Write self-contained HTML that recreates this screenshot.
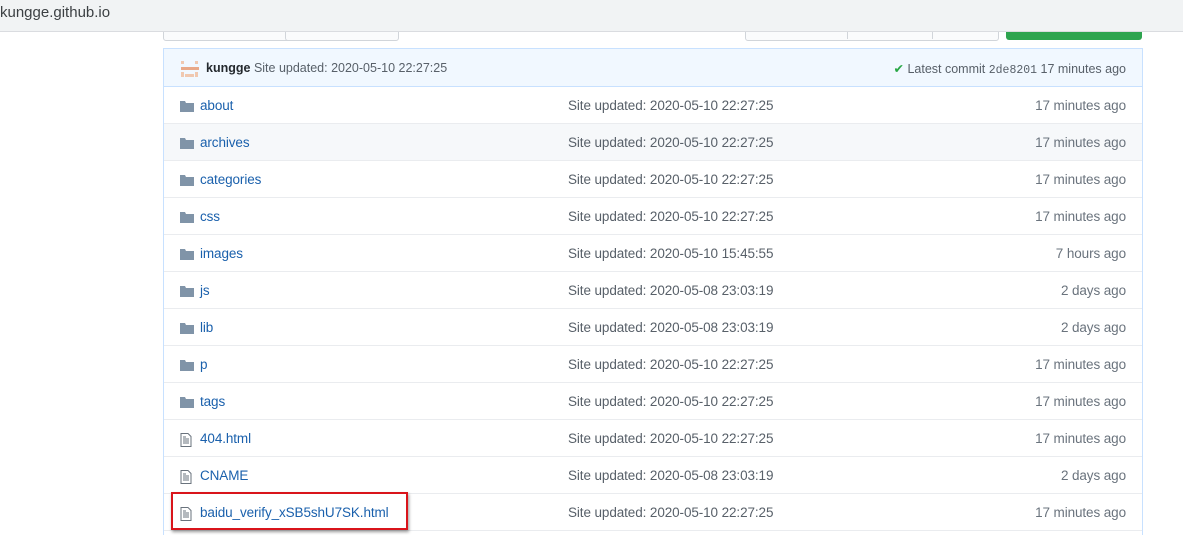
<!DOCTYPE html>
<html><head><style>
html,body{margin:0;width:1183px;height:535px;overflow:hidden}
body{background:#fff;font-family:"Liberation Sans",sans-serif;font-size:14px;color:#24292e;position:relative}
.top{position:absolute;left:0;top:0;width:1183px;height:31px;background:#f1f3f4;border-bottom:1px solid #dadce0;z-index:5}
.top span{position:absolute;left:0;top:4px;font-size:15px;color:#3c4043}
.btn{position:absolute;top:20px;height:19px;border:1px solid #d1d5da;border-radius:0 0 3px 3px;background:#fafbfc}
.box{position:absolute;left:163px;top:48px;width:978px;height:487px;border:1px solid #c8e1ff;border-bottom:none;overflow:hidden}
.hdr{height:37px;background:#f1f8ff;border-bottom:1px solid #c8e1ff;position:relative;font-size:12.5px}
.row{height:36px;border-top:1px solid #eaecef;position:relative;font-size:13.5px;letter-spacing:-0.1px}
.ic{position:absolute;left:16px;top:12px}
.nm{position:absolute;left:36px;top:11px;color:#1a60ac}
.msg{position:absolute;left:404px;top:11px;color:#586069}
.age{position:absolute;right:16px;top:11px;color:#6a737d}
</style></head><body>
<div class="top"><span>kungge.github.io</span></div>
<div class="btn" style="left:163px;width:141px"></div>
<div class="btn" style="left:285px;width:112px"></div>
<div class="btn" style="left:745px;width:252px"></div>
<div style="position:absolute;left:847px;top:31px;width:1px;height:8px;background:#d1d5da"></div>
<div style="position:absolute;left:932px;top:31px;width:1px;height:8px;background:#d1d5da"></div>
<div style="position:absolute;left:1006px;top:20px;width:136px;height:20px;background:#2ea44f;border-radius:0 0 3px 3px"></div>
<div class="box">
<div class="hdr">
<svg style="position:absolute;left:16px;top:10px" width="20" height="20"><rect x="1" y="2" width="3" height="3" fill="#f0c8b0"/><rect x="15" y="2" width="3" height="3" fill="#f0c8b0"/><rect x="1" y="8" width="18" height="3" fill="#e8a888"/><rect x="1" y="13" width="3" height="5" fill="#f0c8b0"/><rect x="15" y="13" width="3" height="5" fill="#f0c8b0"/><rect x="5" y="15" width="9" height="3" fill="#f0c8b0"/></svg>
<span style="position:absolute;left:42px;top:12px"><b>kungge</b> <span style="color:#586069">Site updated: 2020-05-10 22:27:25</span></span>
<span style="position:absolute;right:16px;top:12px;color:#586069"><span style="color:#28a745">✔</span> Latest commit <span style="font-family:'Liberation Mono',monospace;font-size:11.5px">2de8201</span> 17 minutes ago</span>
</div>
<div id="rows"></div>
</div>
<div style="position:absolute;left:171px;top:492px;width:233px;height:34px;border:2px solid #d9141b;box-shadow:1px 2px 3px rgba(0,0,0,.4)"></div>
<script>
var d=[["about","2020-05-10 22:27:25","17 minutes ago",1],["archives","2020-05-10 22:27:25","17 minutes ago",1],["categories","2020-05-10 22:27:25","17 minutes ago",1],["css","2020-05-10 22:27:25","17 minutes ago",1],["images","2020-05-10 15:45:55","7 hours ago",1],["js","2020-05-08 23:03:19","2 days ago",1],["lib","2020-05-08 23:03:19","2 days ago",1],["p","2020-05-10 22:27:25","17 minutes ago",1],["tags","2020-05-10 22:27:25","17 minutes ago",1],["404.html","2020-05-10 22:27:25","17 minutes ago",0],["CNAME","2020-05-08 23:03:19","2 days ago",0],["baidu_verify_xSB5shU7SK.html","2020-05-10 22:27:25","17 minutes ago",0]];
var h="";d.forEach(function(r,i){
var ic=r[3]?'<svg class="ic" width="14" height="12" style="top:13px"><path d="M0 1h5l1 2h8v9H0z" fill="#8094a8"/></svg>':'<svg class="ic" width="12" height="14" style="top:13px"><path d="M1 .5h7l3 3v10H1z" fill="none" stroke="#6a737d"/><path d="M3 6h6M3 8h6M3 10h6M3 4h3" stroke="#6a737d"/></svg>';
h+='<div class="row" style="'+(i==1?'background:#f6f8fa;':'')+(i==0?'border-top:none':'')+'">'+ic+'<span class="nm">'+r[0]+'</span><span class="msg">Site updated: '+r[1]+'</span><span class="age">'+r[2]+'</span></div>';});
h+='<div class="row"></div>';
document.getElementById("rows").innerHTML=h;
</script>
</body></html>
